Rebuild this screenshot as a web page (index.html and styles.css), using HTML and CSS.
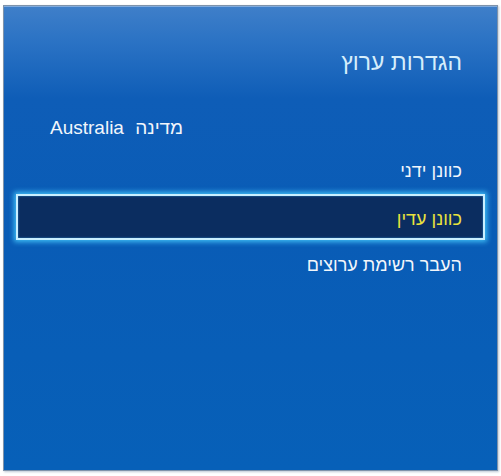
FILE: index.html
```html
<!DOCTYPE html>
<html lang="he" dir="rtl">
<head>
    <meta charset="UTF-8">
    <title>הגדרות ערוץ</title>
    <link rel="stylesheet" href="styles.css">
</head>
<body>

    <div class="panel">
        <div class="title">הגדרות ערוץ</div>

        <div class="country">
            <span class="label">מדינה</span>
            <span class="value">Australia</span>
        </div>

        <!-- תפריט -->
        <ul class="menu">
            <li class="item">כוונן ידני</li>
            <li class="item selected">כוונן עדין</li>
            <li class="item">העבר רשימת ערוצים</li>
        </ul>
    </div>

</body>
</html>
```

FILE: styles.css
```css
body {
    margin: 0;
    padding: 0;
    background-color: #ffffff;
    font-family: 'Liberation Sans', Arial, sans-serif;
}

.panel {
    box-sizing: border-box;
    width: 495px;
    height: 466px;
    margin: 5px 3px;
    padding: 36px 0 0 0;
    border: 1px solid #7f93aa;
    background: linear-gradient(to bottom, #3f7fc9 0%, #2a72c4 8%, #0e5db7 20%, #095cb6 50%, #0760b8 100%);
    box-shadow: inset 0 1px 0 rgba(255, 255, 255, 0.35), 1px 1px 2px rgba(90, 120, 150, 0.4);
    color: #f2f6fb;
}

.title {
    height: 40px;
    line-height: 40px;
    padding-right: 35px;
    font-size: 23px;
    color: #d6eefb;
}

.country {
    height: 40px;
    line-height: 40px;
    margin-top: 26px;
    padding-left: 46px;
    text-align: left;
    font-size: 19px;
}

.country .label {
    margin-left: 6px;
}

.menu {
    list-style: none;
    margin: 0;
    padding: 0;
}

.item {
    height: 46px;
    line-height: 46px;
    padding-right: 35px;
    font-size: 18px;
}

.selected {
    box-sizing: border-box;
    margin: 0 12px;
    padding-right: 21px;
    line-height: 46px;
    background-color: #0b2d60;
    border: 2px solid #c9efff;
    box-shadow: 0 0 5px 2px #3fbdf5, inset 0 0 2px #2f8fd0;
    color: #e9e23d;
}

.selected + .item {
    line-height: 50px;
}
```
